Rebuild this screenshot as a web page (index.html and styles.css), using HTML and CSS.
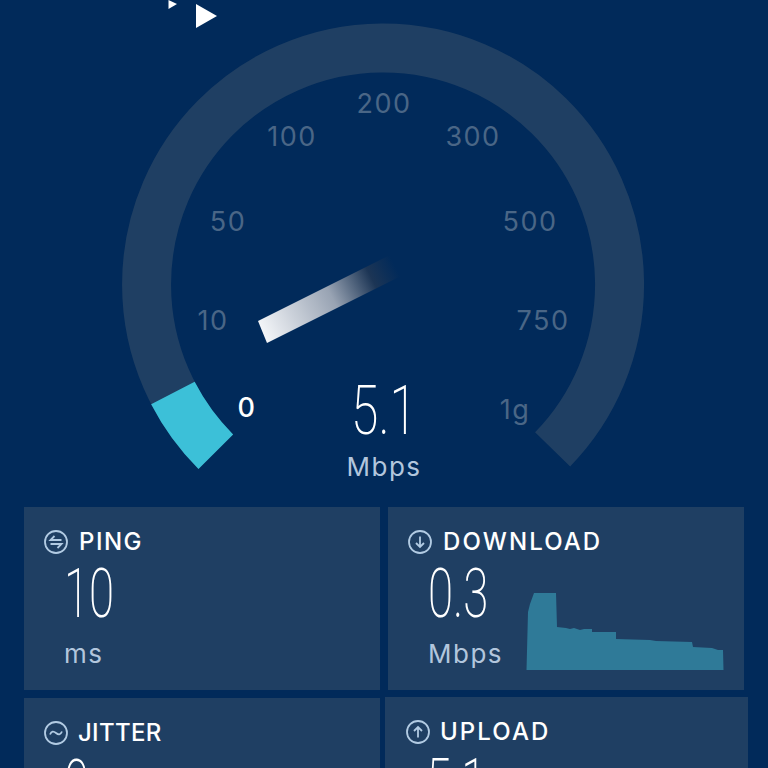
FILE: index.html
```html
<!DOCTYPE html>
<html lang="en">
<head>
<meta charset="utf-8">
<title>Speed test</title>
<link rel="stylesheet" href="styles.css">
</head>
<body>
<main class="page">
  <section class="gauge">
    <svg class="gauge-svg" width="768" height="507" viewBox="0 0 768 507">
      <defs>
        <linearGradient id="needle" gradientUnits="userSpaceOnUse" x1="262" y1="332" x2="402" y2="262">
          <stop offset="0" stop-color="#f4f6f9"/>
          <stop offset="0.5" stop-color="#98a3b3"/>
          <stop offset="0.78" stop-color="#1c3555"/>
          <stop offset="0.95" stop-color="#012a5a"/>
        </linearGradient>
      </defs>
      <polygon class="arrow" points="168.5,0 177,4 168.5,9"/>
      <polygon class="arrow" points="196,4 217,16 196,28"/>
      <path class="track" d="M215.800 451.700 A236.500 236.500 0 1 1 552.600 449.400"/>
      <path class="fill" d="M215.800 451.700 A236.500 236.500 0 0 1 172.900 393"/>
      <polygon fill="url(#needle)" points="258,321 267,343 405,274 396,252"/>
      <text class="tick" x="384" y="113">200</text>
      <text class="tick" x="292" y="146">100</text>
      <text class="tick" x="473" y="146">300</text>
      <text class="tick" x="228" y="231">50</text>
      <text class="tick" x="530" y="231">500</text>
      <text class="tick" x="213" y="330">10</text>
      <text class="tick" x="543" y="330">750</text>
      <text class="tick" x="515" y="419">1g</text>
      <text class="tick tick-on" x="247" y="417">0</text>
      <text class="speed" x="384" y="434" textLength="66" lengthAdjust="spacingAndGlyphs">5.1</text>
      <text class="speed-unit" x="384" y="476">Mbps</text>
    </svg>
  </section>

  <section class="cards">
    <article class="card">
      <h2 class="card-title">
        <svg class="icon" width="24" height="24" viewBox="0 0 24 24"><circle cx="12" cy="12" r="11"/><path d="M17.500 10H6.500L10.500 6M6.500 14H17.500L13.500 18"/></svg>
        PING
      </h2>
      <div class="card-body">
        <div class="reading">
          <div class="value">10</div>
          <div class="unit">ms</div>
        </div>
      </div>
    </article>

    <article class="card">
      <h2 class="card-title card-title-wide">
        <svg class="icon" width="24" height="24" viewBox="0 0 24 24"><circle cx="12" cy="12" r="11"/><path d="M12 6.500V17M8 13L12 17L16 13"/></svg>
        DOWNLOAD
      </h2>
      <div class="card-body">
        <div class="reading">
          <div class="value">0.3</div>
          <div class="unit">Mbps</div>
        </div>
        <svg class="chart" width="198" height="78" viewBox="526 593 198 78">
          <polygon points="526.500,670 528,612 530,604 534,593 556,593 557,627 566,628 570,629 574,628 580,630 584,629 592,629 592,632 616,632 616,639 650,640 656,641 692,642 693,647 712,648 718,650 723,650 723.500,670"/>
        </svg>
      </div>
    </article>

    <article class="card">
      <h2 class="card-title card-title-tight">
        <svg class="icon" width="24" height="24" viewBox="0 0 24 24"><circle cx="12" cy="12" r="11"/><path d="M6 13.500C7.500 10 9.500 10 12 12S16.500 14 18 10.500"/></svg>
        JITTER
      </h2>
      <div class="card-body">
        <div class="reading">
          <div class="value">0</div>
        </div>
      </div>
    </article>

    <article class="card card-active">
      <h2 class="card-title card-title-wide">
        <svg class="icon" width="24" height="24" viewBox="0 0 24 24"><circle cx="12" cy="12" r="11"/><path d="M12 17.500V7M8 11L12 7L16 11"/></svg>
        UPLOAD
      </h2>
      <div class="card-body">
        <div class="reading">
          <div class="value">5.1</div>
        </div>
      </div>
    </article>
  </section>
</main>
</body>
</html>
```

FILE: styles.css
```css
* { box-sizing: border-box; }

html, body {
  margin: 0;
  height: 768px;
  overflow: hidden;
  background: #012a5a;
}

body {
  font-family: "Inter", "Open Sans", sans-serif;
  color: #fff;
}

.page {
  width: 768px;
  height: 768px;
  overflow: hidden;
}

.gauge { height: 507px; }
.gauge-svg { display: block; }

.arrow { fill: #fff; }

.track, .fill {
  fill: none;
  stroke-width: 49;
}
.track { stroke: #1f3f63; }
.fill { stroke: #3cc0d8; }

.tick {
  font-size: 27px;
  font-weight: 400;
  letter-spacing: 1.500px;
  text-anchor: middle;
  fill: #4a6686;
}
.tick-on { fill: #fff; font-weight: 500; }

.speed {
  font-family: "Roboto", sans-serif;
  font-weight: 200;
  font-size: 69px;
  text-anchor: middle;
  fill: #fff;
}
.speed-unit {
  font-size: 26px;
  font-weight: 400;
  letter-spacing: 1.500px;
  text-anchor: middle;
  fill: #b2c6dd;
}

.cards {
  display: grid;
  grid-template-columns: 356px 356px;
  grid-auto-rows: 183px;
  gap: 8px;
  padding: 0 24px;
}

.card {
  background: #1f3f63;
  padding: 23px 0 0 20px;
}

.card-active {
  margin: -1px -4px 0 -3px;
  padding-left: 21px;
}

.card-active .card-title { gap: 10px; }

.card-title {
  display: flex;
  align-items: center;
  gap: 11px;
  margin: 0;
  height: 24px;
  font-size: 24px;
  font-weight: 500;
  letter-spacing: 1.500px;
  line-height: 24px;
}

.card-title-wide { letter-spacing: 2.100px; }
.card-title-tight { gap: 10px; letter-spacing: 0.300px; }

.icon {
  flex: none;
  fill: none;
  stroke: #b2cbe3;
  stroke-width: 1.800;
}

.card-body {
  display: flex;
  align-items: flex-end;
  padding-left: 20px;
}

.reading { width: 98px; flex: none; }

.value {
  height: 72px;
  margin-top: 4px;
  font-family: "Roboto", sans-serif;
  font-weight: 200;
  font-size: 69px;
  line-height: 72px;
  transform: scaleX(0.66);
  transform-origin: left center;
}

.unit {
  margin-top: 9px;
  font-size: 26px;
  letter-spacing: 1.500px;
  line-height: 30px;
  color: #b2c6dd;
}

.chart {
  display: block;
  flex: none;
  fill: #2f7a98;
  margin-bottom: -2px;
}
```
